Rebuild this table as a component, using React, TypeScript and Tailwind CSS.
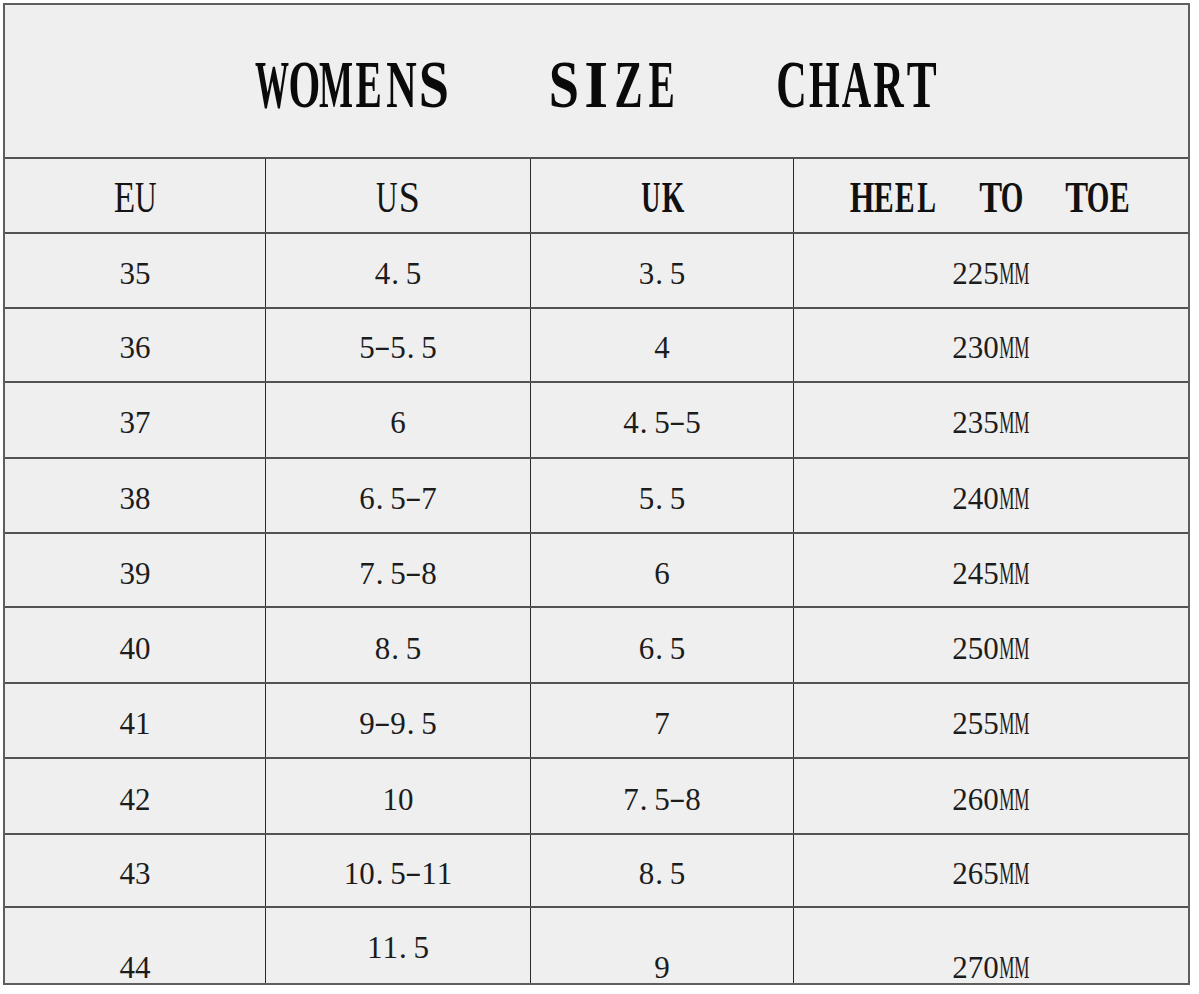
import React from "react";

type Variant = "title" | "head" | "headBold" | "data";

const CELL: Record<Variant, string> = {
  title: "flex w-[32.5px] justify-center",
  head: "flex w-[21.5px] justify-center",
  headBold: "flex w-[21.5px] justify-center",
  data: "flex w-[15.5px] justify-center",
};

const FONT: Record<Variant, string> = {
  title: "font-['Liberation_Serif',serif] text-[68px] font-bold leading-none text-[#0a0a0a]",
  head: "font-['Liberation_Serif',serif] text-[44px] font-normal leading-none text-[#151515]",
  headBold: "font-['Liberation_Serif',serif] text-[44px] font-bold leading-none text-[#111111]",
  data: "font-['Liberation_Serif',serif] text-[31px] font-normal leading-none text-[#1c1c1c]",
};

const SCALE: Record<Variant, Record<string, string>> = {
  title: {
    W: "inline-block scale-x-[0.5]",
    O: "inline-block scale-x-[0.6]",
    M: "inline-block scale-x-[0.53]",
    E: "inline-block scale-x-[0.58]",
    N: "inline-block scale-x-[0.62]",
    S: "inline-block scale-x-[0.8]",
    I: "inline-block scale-x-[0.9]",
    Z: "inline-block scale-x-[0.62]",
    C: "inline-block scale-x-[0.62]",
    H: "inline-block scale-x-[0.58]",
    A: "inline-block scale-x-[0.6]",
    R: "inline-block scale-x-[0.62]",
    T: "inline-block scale-x-[0.66]",
  },
  head: {
    E: "inline-block scale-x-[0.8]",
    U: "inline-block scale-x-[0.68]",
    S: "inline-block scale-x-[0.86]",
  },
  headBold: {
    U: "inline-block scale-x-[0.6]",
    K: "inline-block scale-x-[0.66]",
    H: "inline-block scale-x-[0.72]",
    E: "inline-block scale-x-[0.68]",
    L: "inline-block scale-x-[0.64]",
    T: "inline-block scale-x-[0.78]",
    O: "inline-block scale-x-[0.66]",
  },
  data: {
    M: "inline-block scale-x-[0.55]",
    "-": "inline-block scale-x-[1.6] -translate-y-[2px]",
  },
};

function Mono({ text, v }: { text: string; v: Variant }) {
  return (
    <div className={"flex " + FONT[v]}>
      {text.split("").map((ch, i) => {
        if (ch === " ") return <span key={i} className={CELL[v]} />;
        if (ch === ".")
          return (
            <span key={i} className={CELL[v] + " !justify-start pl-[1px]"}>
              <span className="inline-block">.</span>
            </span>
          );
        const sc = SCALE[v][ch];
        return (
          <span key={i} className={CELL[v]}>
            <span className={sc ?? "inline-block"}>{ch}</span>
          </span>
        );
      })}
    </div>
  );
}

type Row = {
  h: string;
  eu: string;
  us: string;
  uk: string;
  mm: string;
};

const ROWS: Row[] = [
  { h: "h-[75px]", eu: "35", us: "4.5", uk: "3.5", mm: "225MM" },
  { h: "h-[74px]", eu: "36", us: "5-5.5", uk: "4", mm: "230MM" },
  { h: "h-[76px]", eu: "37", us: "6", uk: "4.5-5", mm: "235MM" },
  { h: "h-[76px]", eu: "38", us: "6.5-7", uk: "5.5", mm: "240MM" },
  { h: "h-[74px]", eu: "39", us: "7.5-8", uk: "6", mm: "245MM" },
  { h: "h-[76px]", eu: "40", us: "8.5", uk: "6.5", mm: "250MM" },
  { h: "h-[75px]", eu: "41", us: "9-9.5", uk: "7", mm: "255MM" },
  { h: "h-[76px]", eu: "42", us: "10", uk: "7.5-8", mm: "260MM" },
  { h: "h-[73px]", eu: "43", us: "10.5-11", uk: "8.5", mm: "265MM" },
];

const COLS = "grid grid-cols-[261px_265px_263px_1fr]";
const LINE_H = "border-b-2 border-[#525252]";
const CELL_BASE = "flex items-center justify-center border-r border-[#2a2a2a]";
const CELL_LAST = "flex items-center justify-center";

export default function App() {
  return (
    <div className="min-h-[994px] w-full bg-white pl-[3px] pt-[3px]">
      <div className="flex h-[982px] w-[1187px] flex-col border-2 border-[#5e5e5e] bg-[#efefef]">
        {/* Title */}
        <div className={"flex h-[154px] items-center justify-center pt-[7px] " + LINE_H}>
          <Mono text="WOMENS   SIZE   CHART" v="title" />
        </div>

        {/* Header */}
        <div className={COLS + " h-[75px] " + LINE_H}>
          <div className={CELL_BASE + " pt-[6px]"}>
            <Mono text="EU" v="head" />
          </div>
          <div className={CELL_BASE + " pt-[6px]"}>
            <Mono text="US" v="head" />
          </div>
          <div className={CELL_BASE + " pt-[6px]"}>
            <Mono text="UK" v="headBold" />
          </div>
          <div className={CELL_LAST + " pt-[6px]"}>
            <Mono text="HEEL  TO  TOE" v="headBold" />
          </div>
        </div>

        {/* Data rows */}
        {ROWS.map((r) => (
          <div key={r.eu} className={COLS + " " + r.h + " " + LINE_H}>
            <div className={CELL_BASE + " pt-[6px]"}>
              <Mono text={r.eu} v="data" />
            </div>
            <div className={CELL_BASE + " pt-[6px]"}>
              <Mono text={r.us} v="data" />
            </div>
            <div className={CELL_BASE + " pt-[6px]"}>
              <Mono text={r.uk} v="data" />
            </div>
            <div className={CELL_LAST + " pt-[6px]"}>
              <Mono text={r.mm} v="data" />
            </div>
          </div>
        ))}

        {/* Last row with offset texts */}
        <div className={COLS + " flex-1"}>
          <div className={CELL_BASE + " pt-[44px]"}>
            <Mono text="44" v="data" />
          </div>
          <div className={CELL_BASE + " pt-[4px]"}>
            <Mono text="11.5" v="data" />
          </div>
          <div className={CELL_BASE + " pt-[44px]"}>
            <Mono text="9" v="data" />
          </div>
          <div className={CELL_LAST + " pt-[44px]"}>
            <Mono text="270MM" v="data" />
          </div>
        </div>
      </div>
    </div>
  );
}
